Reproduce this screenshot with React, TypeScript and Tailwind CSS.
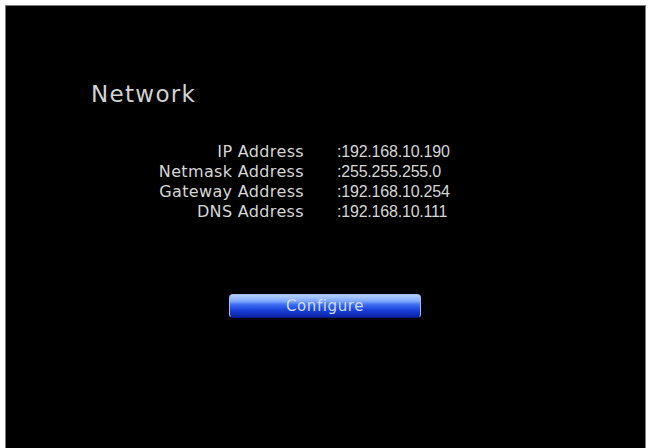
const rows = [
  { label: "IP Address", value: ":192.168.10.190" },
  { label: "Netmask Address", value: ":255.255.255.0" },
  { label: "Gateway Address", value: ":192.168.10.254" },
  { label: "DNS Address", value: ":192.168.10.111" },
];

const App = () => {
  return (
    <div className="w-[648px] h-[448px] bg-white pt-[5px] pl-[5px] pr-[2px] overflow-hidden">
      <div className="h-full bg-black border-l border-t border-r border-[#7c7c7c] font-['DejaVu_Sans',sans-serif]">
        {/* Title */}
        <div className="pt-[74px] pl-[85px] text-[23px] leading-[28px] tracking-[1.3px] text-[#d2d2d2]">
          Network
        </div>

        {/* Address list */}
        <div className="mt-[34px] grid grid-cols-[298px_auto] gap-x-[33px] text-[16px] leading-[20px] text-[#d6d6d6]">
          {rows.map((row) => (
            <div key={row.label} className="contents">
              <span className="text-right tracking-[0.35px]">{row.label}</span>
              <span className="font-['Liberation_Sans',sans-serif] tracking-[-0.2px]">
                {row.value}
              </span>
            </div>
          ))}
        </div>

        {/* Configure button */}
        <div className="mt-[72px] pl-[223px]">
          <div className="w-[192px] h-[24px] rounded-[4px] border border-[#9cbcff] border-b-[#0a1a80] bg-[linear-gradient(to_bottom,#b4d0ff_0%,#7fa8fc_28%,#3a6af2_45%,#1840d6_70%,#0b22a4_100%)] flex items-center justify-center text-[15px] tracking-[0.6px] text-[#cfdcf8]">
            Configure
          </div>
        </div>
      </div>
    </div>
  );
};

export default App;
